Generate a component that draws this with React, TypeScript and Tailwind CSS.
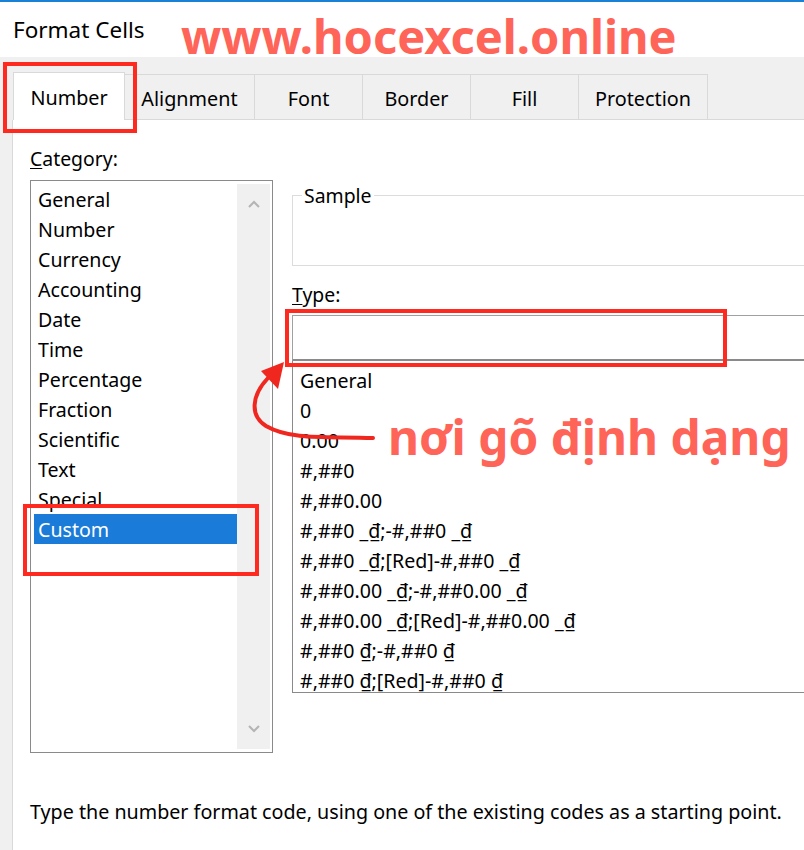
import { FC } from "react";

const categories = [
  "General",
  "Number",
  "Currency",
  "Accounting",
  "Date",
  "Time",
  "Percentage",
  "Fraction",
  "Scientific",
  "Text",
  "Special",
  "Custom",
];

const formats = [
  "General",
  "0",
  "0.00",
  "#,##0",
  "#,##0.00",
  "#,##0 _₫;-#,##0 _₫",
  "#,##0 _₫;[Red]-#,##0 _₫",
  "#,##0.00 _₫;-#,##0.00 _₫",
  "#,##0.00 _₫;[Red]-#,##0.00 _₫",
  "#,##0 ₫;-#,##0 ₫",
  "#,##0 ₫;[Red]-#,##0 ₫",
];

const tabs = [
  { label: "Alignment", width: "w-[130px]" },
  { label: "Font", width: "w-[108px]" },
  { label: "Border", width: "w-[108px]" },
  { label: "Fill", width: "w-[108px]" },
  { label: "Protection", width: "w-[129px]" },
];

const Chevron: FC<{ up?: boolean }> = ({ up }) => (
  <svg width="12" height="8" viewBox="0 0 12 8">
    <polyline
      points={up ? "1,7 6,2 11,7" : "1,1 6,6 11,1"}
      fill="none"
      stroke="#b4b4b4"
      strokeWidth="2"
    />
  </svg>
);

const App: FC = () => {
  return (
    <div className="relative w-[804px] h-[850px] overflow-hidden bg-white text-black font-['Noto_Sans','Open_Sans',sans-serif]">
      {/* title bar */}
      <div className="h-[57px] border-t-2 border-[#1a82d6] pl-[13px] pt-[14px] text-[22.5px] leading-[28px]">
        Format Cells
      </div>

      {/* tabs */}
      <div className="flex items-end h-[63px] bg-[#f0f0f0]">
        <div className="w-[13px] h-full shrink-0" />
        <div className="w-[112px] h-[48px] shrink-0 bg-white border border-b-0 border-[#d9d9d9] flex items-center justify-center pt-[3px] text-[19.8px]">
          Number
        </div>
        {tabs.map((t) => (
          <div
            key={t.label}
            className={`${t.width} h-[46px] shrink-0 border-r border-y border-[#d9d9d9] flex items-center justify-center pt-[3px] text-[19.8px]`}
          >
            {t.label}
          </div>
        ))}
        <div className="flex-1 border-b border-[#d9d9d9]" />
      </div>

      {/* body */}
      <div className="flex h-[730px]">
        <div className="w-[13px] shrink-0 bg-[#f0f0f0] border-r border-[#d9d9d9]" />
        <div className="flex-1 min-w-0 pl-[17px]">
          <p className="pt-[28px] mb-[10px] text-[19.4px] leading-[22px]">
            <span className="underline underline-offset-2">C</span>ategory:
          </p>

          <div className="flex">
            {/* category list */}
            <div className="flex shrink-0 w-[243px] h-[573px] border border-[#8a8a8a]">
              <div className="flex-1 pt-[3px] pl-[3px]">
                {categories.map((c) => (
                  <div
                    key={c}
                    className={`h-[30px] pl-[4px] pt-[2px] text-[19.6px] leading-[28px] ${
                      c === "Custom" ? "bg-[#1a7cd8] text-white" : ""
                    }`}
                  >
                    {c}
                  </div>
                ))}
              </div>
              <div className="w-[33px] my-[3px] mr-[2px] bg-[#f0f0f0] flex flex-col items-center justify-between py-[16px]">
                <Chevron up />
                <Chevron />
              </div>
            </div>

            {/* right column */}
            <div className="ml-[19px] w-[540px] shrink-0">
              <div className="relative mt-[15px] h-[71px] border border-[#dcdcdc]">
                <span className="absolute left-[9px] top-[-11px] px-[2px] bg-white text-[19.4px] leading-[22px]">
                  Sample
                </span>
              </div>

              <p className="mt-[18px] mb-[9px] text-[19.4px] leading-[22px]">
                <span className="underline underline-offset-2">T</span>ype:
              </p>

              <div className="h-[46px] border-t border-l border-[#a0a0a0] border-b-2 border-b-[#8a8a8a]" />

              <div className="h-[332px] border-l border-b border-[#8a8a8a] pl-[7px] pt-[5px]">
                {formats.map((f) => (
                  <div key={f} className="h-[30px] text-[19.6px] leading-[30px] whitespace-nowrap">
                    {f}
                  </div>
                ))}
              </div>
            </div>
          </div>

          <p className="mt-[48px] text-[19.7px] leading-[22px] whitespace-nowrap">
            Type the number format code, using one of the existing codes as a starting point.
          </p>
        </div>
      </div>

      {/* annotations */}
      <div className="absolute left-[3px] top-[62px] w-[134px] h-[71px] border-4 border-[#ff2a1f]" />
      <div className="absolute left-[23px] top-[504px] w-[236px] h-[72px] border-4 border-[#ff2a1f]" />
      <div className="absolute left-[285px] top-[309px] w-[442px] h-[58px] border-4 border-[#ff2a1f]" />

      <div className="absolute left-[181px] top-[4px] text-[47px] leading-[64px] font-bold text-[#ff6459] whitespace-nowrap">
        www.hocexcel.online
      </div>
      <div className="absolute left-[388px] top-[405px] text-[47.8px] leading-[64px] font-bold text-[#ff6459] whitespace-nowrap">
        nơi gõ định dạng
      </div>

      <svg className="absolute inset-0 pointer-events-none" width="804" height="850">
        <path
          d="M373 438 C330 436 292 441 266 426 C250 416 251 396 268 378"
          fill="none"
          stroke="#f0271f"
          strokeWidth="4"
          strokeLinecap="round"
        />
        <polygon points="284,362 261,371 278,389" fill="#f0271f" />
      </svg>
    </div>
  );
};

export default App;
